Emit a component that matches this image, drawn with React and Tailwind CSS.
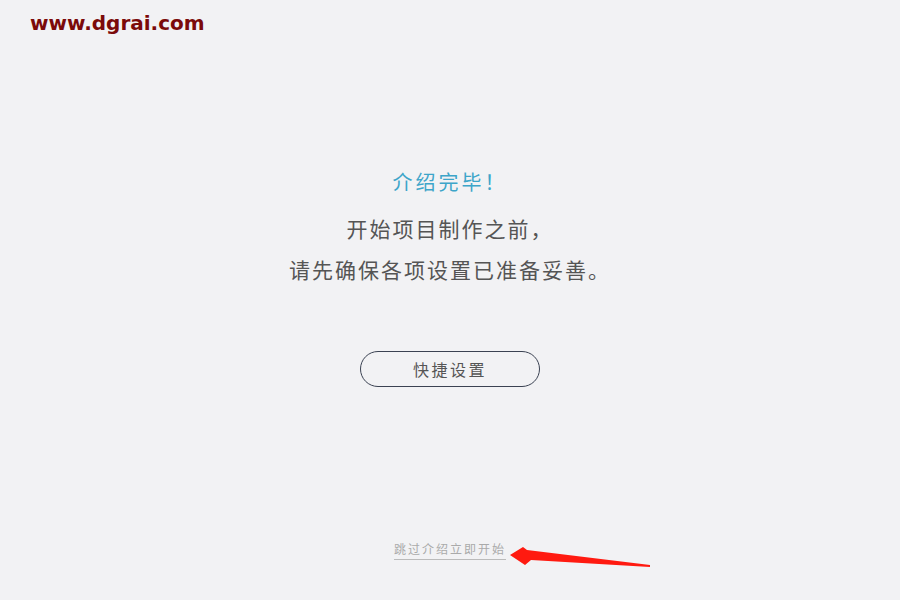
export default function App() {
  const cjk = { fontFamily: '"Noto Sans CJK SC", "Noto Sans", sans-serif' };
  return (
    <div className="relative w-[900px] h-[600px] bg-[#f2f2f4] overflow-hidden" style={cjk}>
      <div
        className="absolute top-[11px] left-[30px] text-[20px] leading-[24px] font-bold text-[#7b0a0a]"
        style={{ fontFamily: '"DejaVu Sans", Verdana, sans-serif' }}
      >
        www.dgrai.com
      </div>

      <div className="flex flex-col items-center pt-[168px]">
        <div className="text-[20px] leading-[28px] tracking-[3px] text-[#3da5c9]">介绍完毕！</div>
        <div className="mt-[12px] flex flex-col items-center text-[21px] leading-[41px] tracking-[2px] text-[#555555]">
          <div>开始项目制作之前，</div>
          <div>请先确保各项设置已准备妥善。</div>
        </div>
        <button className="mt-[61px] w-[180px] h-[36px] rounded-full border border-[#3b4252] text-[16px] tracking-[2.5px] text-[#555555] flex items-center justify-center">
          快捷设置
        </button>
        <div className="mt-[153px] text-[12px] leading-[18px] tracking-[2px] text-[#aaaaaa] border-b border-[#bbbbbb] pb-[1px]">
          跳过介绍立即开始
        </div>
      </div>

      <svg className="absolute left-0 top-0" width="900" height="600" viewBox="0 0 900 600">
        <polygon
          points="510,555 523,547 527,550 650,565 650,567 531,560 525,565"
          fill="#ff1a10"
        />
      </svg>
    </div>
  );
}
